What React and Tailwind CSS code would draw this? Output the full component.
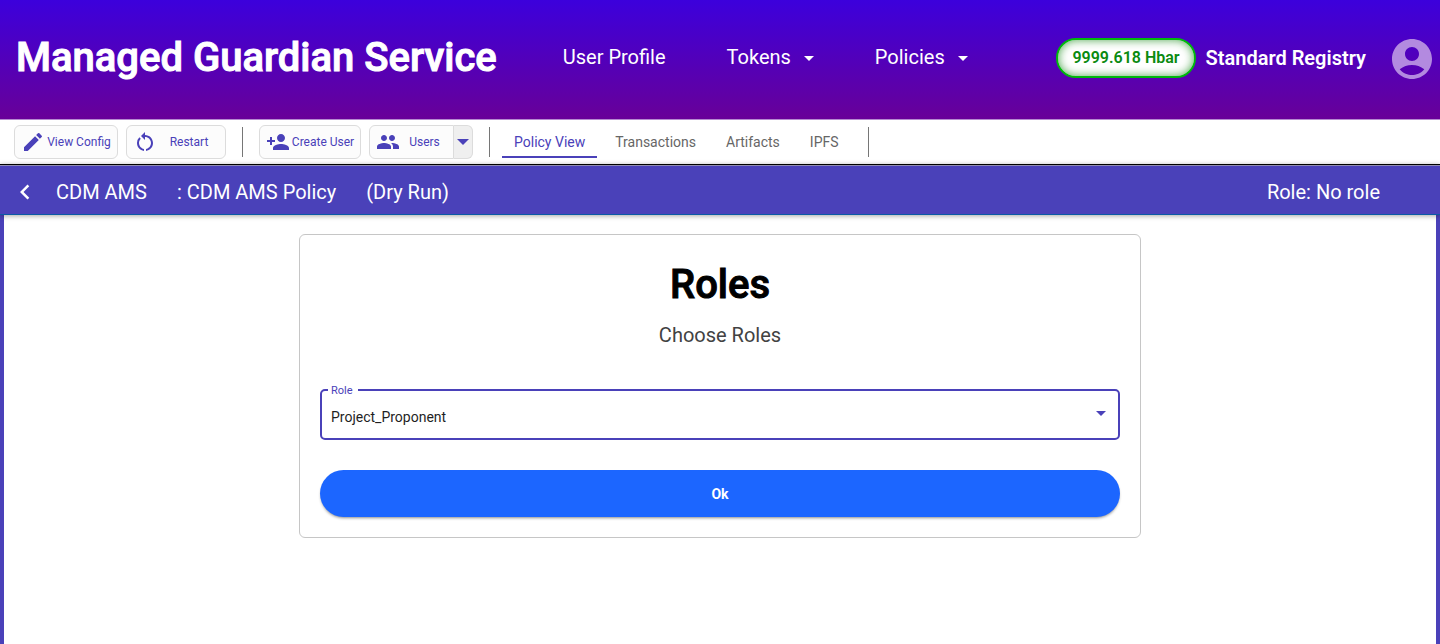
import { useState } from "react";
import {
  MdAccountCircle,
  MdChevronLeft,
  MdEdit,
  MdPeople,
  MdPersonAdd,
  MdRestartAlt,
} from "react-icons/md";

function Caret({ className }) {
  return (
    <svg viewBox="0 0 10 5" className={className} fill="currentColor" aria-hidden="true">
      <path d="M0 0h10L5 5z" />
    </svg>
  );
}

function Header() {
  return (
    <header className="flex h-[120px] shrink-0 items-center border-b border-[#b58bd0] bg-[linear-gradient(#3c00dc,#680098)] pr-1 pb-1 pl-4 text-xl text-white">
      <h1 className="text-[40px] leading-[50px] font-medium whitespace-nowrap [-webkit-text-stroke:1px_currentColor]">
        Managed Guardian Service
      </h1>
      <nav className="ml-[66px] flex items-center gap-[61px] pb-[2px] whitespace-nowrap">
        <a href="#profile">User Profile</a>
        <button type="button" className="flex items-center gap-[13px]">
          Tokens
          <Caret className="mt-1 h-[5px] w-[10px]" />
        </button>
        <button type="button" className="flex items-center gap-[13px]">
          Policies
          <Caret className="mt-1 h-[5px] w-[10px]" />
        </button>
      </nav>
      <div className="ml-auto flex items-center whitespace-nowrap">
        <span className="flex h-10 items-center rounded-full border-2 border-[#00b80c] bg-white px-[14px] text-base font-semibold text-[#0a8a10] shadow-[inset_0_0_10px_rgba(0,128,0,0.7)]">
          9999.618 Hbar
        </span>
        <span className="ml-[10px] font-semibold">Standard Registry</span>
        <button type="button" aria-label="Account" className="ml-[22px] pt-[2px] text-[#b38ae0]">
          <MdAccountCircle className="size-12" />
        </button>
      </div>
    </header>
  );
}

function ToolButton({ icon: Icon, className, children }) {
  return (
    <button
      type="button"
      className={`flex h-[34px] items-center rounded-md border border-[#dcdcdc] bg-[#fcfcfc] pr-1 pl-[6px] text-xs text-[#4a41b9] ${className}`}
    >
      <Icon className="size-6 shrink-0" />
      <span className="flex-1 text-center">{children}</span>
    </button>
  );
}

function Divider() {
  return <div className="h-[30px] w-px bg-[#767676]" />;
}

const tabs = ["Policy View", "Transactions", "Artifacts", "IPFS"];

function Toolbar() {
  const [active, setActive] = useState("Policy View");
  return (
    <div className="flex h-11 shrink-0 items-center pl-[14px] whitespace-nowrap">
      <ToolButton icon={MdEdit} className="w-[104px]">View Config</ToolButton>
      <ToolButton icon={MdRestartAlt} className="ml-2 w-[100px]">Restart</ToolButton>
      <div className="mx-4">
        <Divider />
      </div>
      <ToolButton icon={MdPersonAdd} className="w-[102px]">Create User</ToolButton>
      <div className="ml-2 flex">
        <ToolButton icon={MdPeople} className="w-[85px] rounded-r-none">Users</ToolButton>
        <button
          type="button"
          aria-label="Choose user"
          className="flex h-[34px] w-[19px] items-center justify-center rounded-r-md border border-l-0 border-[#dcdcdc] bg-[#efefef] text-[#4a41b9]"
        >
          <Caret className="h-[6px] w-[12px]" />
        </button>
      </div>
      <div className="mr-3 ml-4">
        <Divider />
      </div>
      <div role="tablist" className="flex gap-[6px]">
        {tabs.map((tab) => (
          <button
            key={tab}
            type="button"
            role="tab"
            aria-selected={tab === active}
            onClick={() => setActive(tab)}
            className={`h-8 border-b-2 px-3 pt-[2px] text-sm ${
              tab === active ? "border-[#4a41b9] text-[#4a41b9]" : "border-transparent text-[#666666]"
            }`}
          >
            {tab}
          </button>
        ))}
      </div>
      <div className="ml-[17px]">
        <Divider />
      </div>
    </div>
  );
}

function PolicyBar() {
  return (
    <div className="relative flex h-[51px] shrink-0 items-center border-t border-b border-t-black border-b-[#0b5aa5] bg-[#4a41b9] pt-1 pr-[60px] pl-[10px] text-xl whitespace-nowrap text-white shadow-[inset_0_1px_0_#8f8bb0,0_1px_5px_rgba(0,0,0,0.35)]">
      <button type="button" aria-label="Back">
        <MdChevronLeft className="size-[30px]" />
      </button>
      <span className="ml-4">CDM AMS</span>
      <span className="ml-[30px]">: CDM AMS Policy</span>
      <span className="ml-[30px]">(Dry Run)</span>
      <span className="ml-auto">Role: No role</span>
    </div>
  );
}

function RoleForm() {
  return (
    <form
      onSubmit={(event) => event.preventDefault()}
      className="mx-auto w-full max-w-[842px] rounded-md border border-[#c6c6c6] p-5"
    >
      <h2 className="pt-[5px] text-center text-[40px] leading-[50px] font-medium text-black [-webkit-text-stroke:1px_currentColor]">
        Roles
      </h2>
      <p className="mt-[11px] text-center text-xl leading-7 text-[#424242]">Choose Roles</p>
      <fieldset className="relative mt-[34px] h-[57px] rounded-[5px] border-2 border-[#4a41b9] px-[6px]">
        <legend className="pt-[2px] pr-[5px] pl-[3px] text-[11px] leading-3 text-[#4a41b9]">
          <label htmlFor="role">Role</label>
        </legend>
        <select
          id="role"
          defaultValue="Project_Proponent"
          className="mt-1 h-8 w-full appearance-none bg-transparent pl-[3px] text-sm text-[#1f1f1f] outline-none"
        >
          <option>Project_Proponent</option>
        </select>
        <Caret className="pointer-events-none absolute top-[14px] right-3 h-[5px] w-[10px] text-[#4a41b9]" />
      </fieldset>
      <button
        type="submit"
        className="mt-[30px] h-[47px] w-full rounded-full bg-[#1c66ff] text-sm font-bold text-white shadow-[0_2px_3px_-1px_rgba(0,0,0,0.45)]"
      >
        Ok
      </button>
    </form>
  );
}

export default function App() {
  return (
    <div className="flex min-h-screen flex-col bg-white font-[Roboto,'Liberation_Sans',sans-serif]">
      <Header />
      <Toolbar />
      <PolicyBar />
      <main className="flex-1 border-x-4 border-[#4a41b9] px-5 pt-[19px] pb-5">
        <RoleForm />
      </main>
    </div>
  );
}
